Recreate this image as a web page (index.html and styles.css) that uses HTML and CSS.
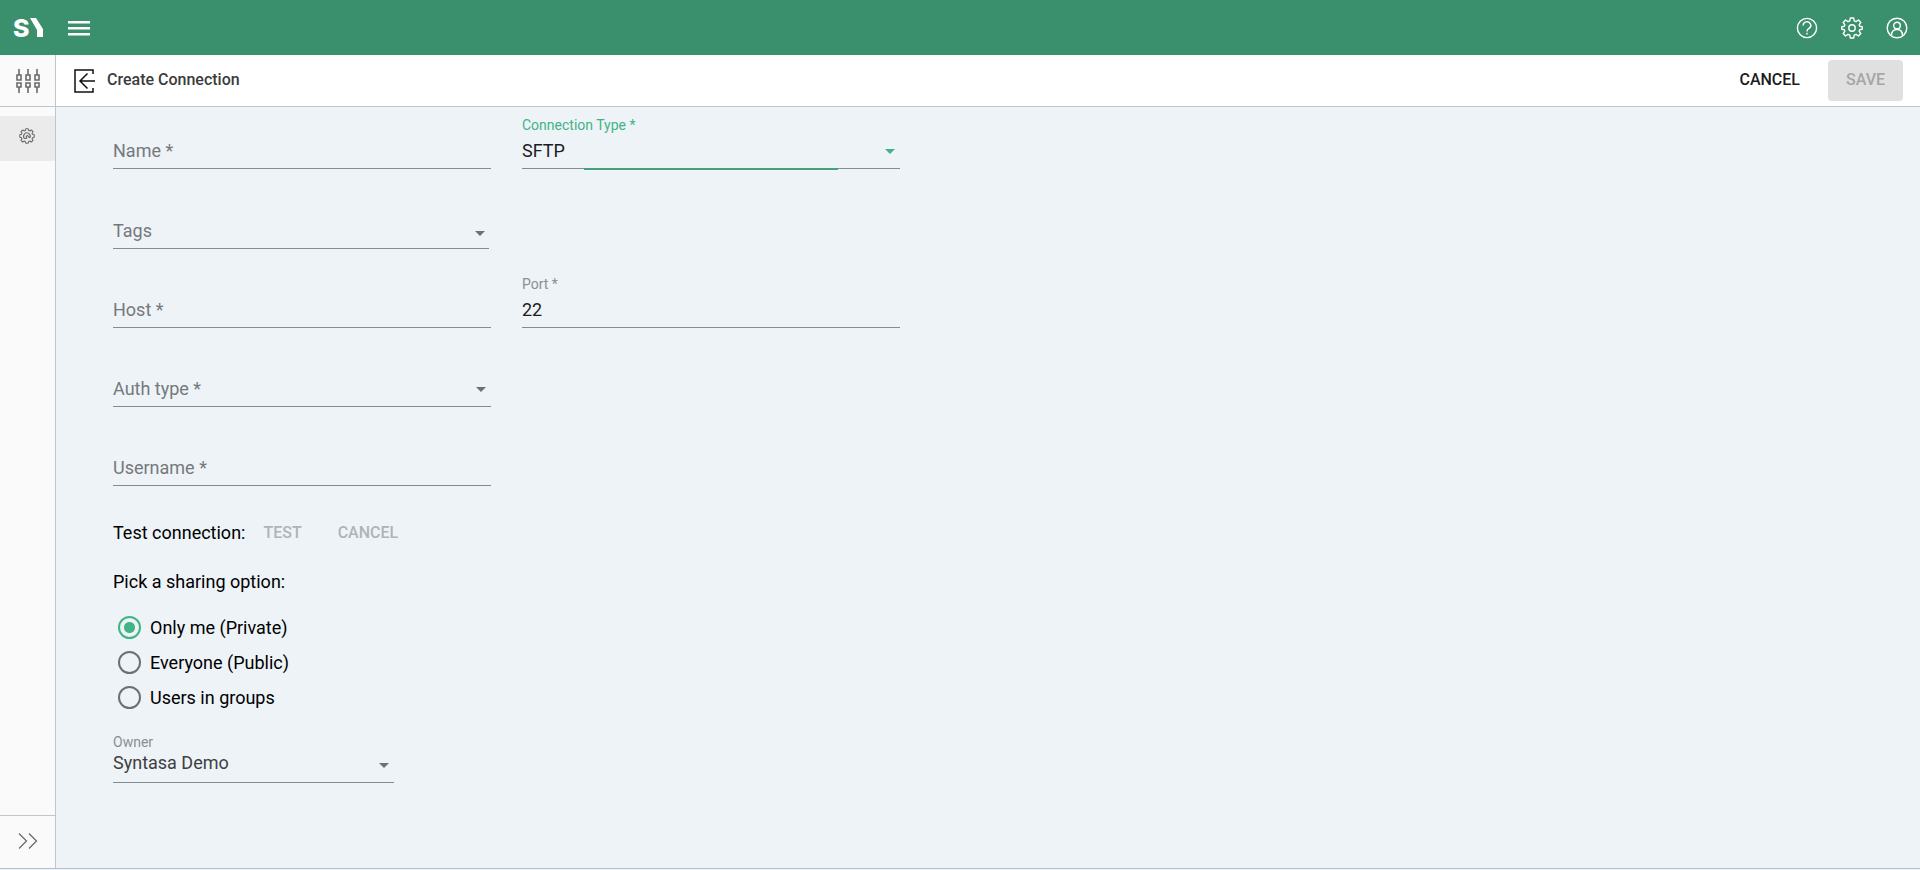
FILE: index.html
```html
<!DOCTYPE html>
<html lang="en">
<head>
  <meta charset="UTF-8" />
  <meta name="viewport" content="width=device-width, initial-scale=1" />
  <title>Create Connection</title>
  <link rel="stylesheet" href="styles.css">
</head>
<body>
  <header class="topbar">
    <a class="logo" href="#" aria-label="Syntasa home">
      <svg width="32" height="33" viewBox="0 0 32 33">
        <text class="logo-letter" x="0" y="26">S</text>
        <path d="M17 7h6l7 11v8h-6v-7z" />
      </svg>
    </a>
    <button class="icon-btn menu-btn" type="button" aria-label="Toggle menu">
      <svg width="22" height="17" viewBox="0 0 22 17" fill="#fff">
        <path d="M0 2h22v2.500H0zM0 8h22v2.500H0zM0 14h22v2.500H0z" />
      </svg>
    </button>
    <nav class="topbar-actions" aria-label="Account">
      <button class="icon-btn" type="button" aria-label="Help">
        <svg width="22" height="22" viewBox="0 0 22 22" fill="none" stroke="#fff" stroke-width="1.4">
          <circle cx="11" cy="11" r="9.6" />
          <path d="M7.200 8.600a3.800 3.600 0 1 1 5.800 2.800c-1.400.8-2 1.400-2 3.200" />
          <path d="M11 15.800v1.700" />
        </svg>
      </button>
      <button class="icon-btn" type="button" aria-label="Settings">
        <svg width="22" height="22" viewBox="0 0 22 22" fill="none" stroke="#fff" stroke-width="1.4" stroke-linejoin="round">
          <circle cx="11" cy="11" r="3.2" />
          <path d="M9.300 1h3.400l.5 2.900 1.800.8 2.500-1.700 2.300 2.400-1.700 2.400.6 1.500 2.500.5v2.400l-2.500.5-.6 1.500 1.700 2.400-2.300 2.400-2.500-1.700-1.800.8-.5 2.900H9.300l-.5-2.900-1.800-.8L4.500 19l-2.300-2.400 1.700-2.400-.6-1.500-2.500-.5V9.800l2.500-.5.6-1.500-1.700-2.400L4.500 3 7 4.700l1.800-.8z" />
        </svg>
      </button>
      <button class="icon-btn" type="button" aria-label="User profile">
        <svg width="22" height="22" viewBox="0 0 22 22" fill="none" stroke="#fff" stroke-width="1.4">
          <circle cx="11" cy="11" r="9.800" />
          <circle cx="11" cy="8.500" r="3.300" />
          <path d="M5.500 18.500c0-3.800 2.300-6 5.500-6s5.500 2.200 5.500 6" />
        </svg>
      </button>
    </nav>
  </header>

  <div class="shell">
    <aside class="sidebar">
      <a class="sidebar-head" href="#" aria-label="Administration">
        <svg width="24" height="24" viewBox="0 0 24 24" fill="none" stroke="#6b6b6b" stroke-width="1.6">
          <path d="M3 0v6M12 0v6M21 0v6M3 18v6M12 18v6M21 18v6" />
          <path d="M1 6h4v5H1zM10 6h4v5h-4zM19 6h4v5h-4zM1 14h4v4H1zM10 14h4v4h-4zM19 14h4v4h-4z" />
        </svg>
      </a>
      <nav class="sidebar-nav" aria-label="Main">
        <a class="sidebar-item active" href="#" aria-label="Connections">
          <svg width="16" height="16" viewBox="0 0 16 16" fill="none" stroke="#6b6b6b" stroke-width="1.1" stroke-linejoin="round">
            <path d="M6.800.8h2.400l.5 1.700 1 .4 1.600-.9 1.700 1.700-.9 1.600.4 1 1.700.5v2.400l-1.700.5-.4 1 .9 1.600-1.700 1.700-1.600-.9-1 .4-.5 1.700H6.800l-.5-1.700-1-.4-1.600.9L2 12.300l.9-1.600-.4-1L.8 9.200V6.800l1.700-.5.4-1L2 3.700 3.700 2l1.600.9 1-.4z" />
            <path d="M5.500 10.500a3.300 3.300 0 1 1 5.200-.5M5.500 10.500h2.200M8 10.500l-.8-2 1.300-1.200 2.200 2.500" />
          </svg>
        </a>
      </nav>
      <button class="sidebar-expand" type="button" aria-label="Expand sidebar">
        <svg width="20" height="16" viewBox="0 0 20 16" fill="none" stroke="#6b6b6b" stroke-width="1.3">
          <path d="M1 .5L8.500 8 1 15.500M11 .5L18.500 8 11 15.500" />
        </svg>
      </button>
    </aside>

    <main class="page">
      <div class="page-head">
        <a class="back-link" href="#" aria-label="Back to connections">
          <svg width="22" height="24" viewBox="0 0 22 24" fill="none" stroke="#111" stroke-width="1.5">
            <path d="M19 5V1H1v22h18v-4" />
            <path d="M21 12H6M13.500 4.500L6 12l7.500 7.500" />
          </svg>
        </a>
        <h1 class="page-title">Create Connection</h1>
        <button class="btn" type="button">CANCEL</button>
        <button class="btn btn-save" type="submit" form="connection-form" disabled>SAVE</button>
      </div>

      <form class="connection-form" id="connection-form">
        <div class="row">
          <div class="field empty">
            <label for="name">Name *</label>
            <input id="name" type="text">
          </div>
          <div class="field select focused">
            <label for="connection-type">Connection Type *</label>
            <select id="connection-type">
              <option>SFTP</option>
            </select>
          </div>
        </div>
        <div class="row">
          <div class="field select combo empty">
            <label for="tags">Tags</label>
            <select id="tags">
              <option value=""></option>
            </select>
          </div>
        </div>
        <div class="row">
          <div class="field empty">
            <label for="host">Host *</label>
            <input id="host" type="text">
          </div>
          <div class="field">
            <label for="port">Port *</label>
            <input id="port" type="text" value="22">
          </div>
        </div>
        <div class="row">
          <div class="field select empty">
            <label for="auth-type">Auth type *</label>
            <select id="auth-type">
              <option value=""></option>
            </select>
          </div>
        </div>
        <div class="row">
          <div class="field empty">
            <label for="username">Username *</label>
            <input id="username" type="text">
          </div>
        </div>

        <div class="test-row">
          <span>Test connection:</span>
          <button class="btn" type="button" disabled>TEST</button>
          <button class="btn" type="button" disabled>CANCEL</button>
        </div>

        <fieldset class="sharing">
          <legend>Pick a sharing option:</legend>
          <label class="radio"><input type="radio" name="sharing" checked>Only me (Private)</label>
          <label class="radio"><input type="radio" name="sharing">Everyone (Public)</label>
          <label class="radio"><input type="radio" name="sharing">Users in groups</label>
        </fieldset>

        <div class="field select owner">
          <label for="owner">Owner</label>
          <select id="owner">
            <option>Syntasa Demo</option>
          </select>
        </div>
      </form>
    </main>
  </div>
</body>
</html>
```

FILE: styles.css
```css
:root {
  --green-bar: #3a8f6d;
  --accent: #41b486;
  --page-bg: #edf3f7;
  --line: #bfc7cd;
  --field-line: #868b90;
  --text: #1c1c1e;
  --muted: #75797c;
}

* {
  margin: 0;
  padding: 0;
  box-sizing: border-box;
}

body {
  min-height: 100vh;
  display: flex;
  flex-direction: column;
  font-family: Roboto, sans-serif;
  font-size: 18px;
  line-height: 24px;
  color: var(--text);
  background: var(--page-bg);
}

button,
input,
select {
  font: inherit;
  color: inherit;
  background: none;
  border: 0;
}

svg {
  display: block;
}

/* Top bar */
.topbar {
  display: flex;
  align-items: center;
  height: 55px;
  padding: 0 12px 0 13px;
  background: var(--green-bar);
}
.logo {
  fill: #fff;
}
.logo svg {
  overflow: visible;
}
.logo-letter {
  font-family: Inter, sans-serif;
  font-size: 25px;
  line-height: 30px;
  font-weight: 800;
}
.icon-btn {
  cursor: pointer;
}
.menu-btn {
  margin-left: 23px;
}
.topbar-actions {
  display: flex;
  gap: 23px;
  margin-left: auto;
}

/* Sidebar */
.shell {
  flex: 1;
  display: flex;
  margin-bottom: 1px;
  border-bottom: 1px solid #b4c0cc;
}
.sidebar {
  display: flex;
  flex-direction: column;
  width: 56px;
  background: #fafafa;
  border-right: 1px solid var(--line);
}
.sidebar-head,
.sidebar-item,
.sidebar-expand {
  display: flex;
  align-items: center;
  justify-content: center;
}
.sidebar-head {
  height: 52px;
  border-bottom: 1px solid var(--line);
}
.sidebar-nav {
  flex: 1;
  padding-top: 9px;
}
.sidebar-item {
  height: 45px;
  padding: 0 1px 5px 0;
}
.sidebar-item.active {
  background: #ebebeb;
}
.sidebar-expand {
  height: 53px;
  padding: 0 0 2px 1px;
  border-top: 1px solid var(--line);
}

/* Page header */
.page {
  flex: 1;
}
.page-head {
  display: flex;
  align-items: center;
  height: 52px;
  padding: 0 17px 0 18px;
  background: #fff;
  border-bottom: 1px solid var(--line);
}
.page-title {
  margin: 0 auto 0 11px;
  padding-bottom: 2px;
  font-size: 16px;
  font-weight: 500;
  color: #3c3c3c;
}
.btn {
  height: 41px;
  padding: 0 18px 2px;
  font-size: 16px;
  font-weight: 500;
  border-radius: 4px;
}
.btn:disabled {
  color: #b0b4b7;
}
.btn-save {
  margin-left: 10px;
}
.btn-save:disabled {
  color: #a6a6a6;
  background: #e0e0e0;
}

/* Form */
.connection-form {
  padding: 0 57px 40px;
}
.row {
  display: grid;
  grid-template-columns: repeat(2, minmax(0, 378px));
  column-gap: 31px;
  margin-bottom: 17px;
}
.field {
  position: relative;
  display: grid;
  grid-template-rows: 16px 35px;
  padding-top: 10px;
  border-bottom: 1px solid var(--field-line);
}
.field label {
  grid-area: 1 / 1;
  font-size: 14px;
  line-height: 16px;
  color: #8b8f92;
}
.field input,
.field select {
  grid-area: 2 / 1;
  width: 100%;
  padding: 6px 0 5px;
  outline: none;
  appearance: none;
}
.field.empty label {
  grid-area: 2 / 1;
  padding-top: 6px;
  font-size: 18px;
  line-height: 24px;
  color: var(--muted);
  pointer-events: none;
}
.field.select::after {
  content: "";
  grid-area: 2 / 1;
  justify-self: end;
  width: 10px;
  height: 5px;
  margin: 16px 5px 0 0;
  background: #6c7073;
  clip-path: polygon(0 0, 100% 0, 50% 100%);
  pointer-events: none;
}
.field.combo {
  padding-top: 11px;
  margin-right: 2px;
}
.field.combo::after {
  margin: 18px 4px 0 0;
}
.field.focused label {
  color: var(--accent);
}
.field.focused::after {
  background: var(--accent);
}
.field.focused::before {
  content: "";
  position: absolute;
  left: 16.4%;
  right: 16.4%;
  bottom: -2px;
  height: 2px;
  background: #45a17d;
}

.test-row {
  display: flex;
  align-items: center;
  margin-top: 26px;
  color: #000;
}
.test-row .btn {
  padding-bottom: 0;
}

.sharing {
  margin-top: 17px;
  border: 0;
  color: #000;
}
.sharing legend {
  margin-bottom: 16px;
}
.radio {
  display: flex;
  align-items: center;
  gap: 9px;
  height: 35px;
  padding-left: 5px;
}
.radio input {
  width: 23px;
  height: 23px;
  border: 2px solid #6c7073;
  border-radius: 50%;
  appearance: none;
}
.radio input:checked {
  border-color: var(--accent);
  background: radial-gradient(circle, var(--accent) 5px, transparent 6px);
}

.field.owner {
  width: 281px;
  grid-template-rows: 16px 32px;
  padding-top: 11px;
  margin-top: 8px;
}
.field.owner select {
  padding: 1px 0 7px;
  color: #3c3f42;
}
.field.owner::after {
  margin-top: 13px;
}

@media (max-width: 700px) {
  .row {
    grid-template-columns: minmax(0, 378px);
    row-gap: 17px;
  }
  .connection-form {
    padding: 0 24px 40px;
  }
}
```
